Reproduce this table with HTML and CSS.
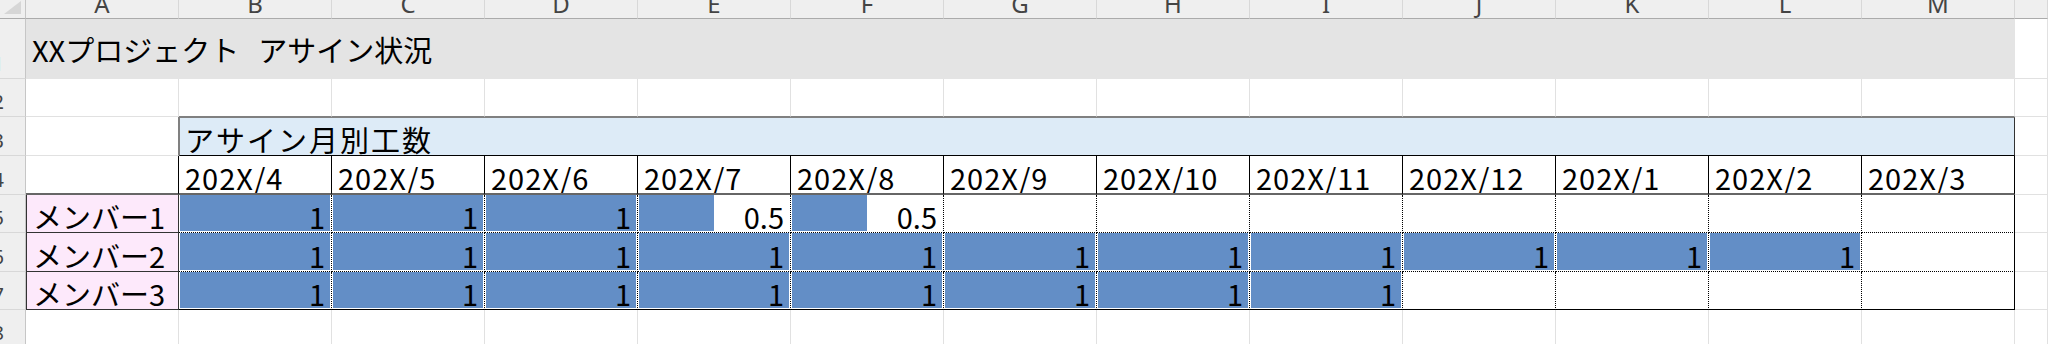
FILE: index.html
```html
<!DOCTYPE html>
<html lang="ja">
<head>
<meta charset="utf-8">
<title>XXプロジェクト アサイン状況</title>
<link rel="stylesheet" href="styles.css">
</head>
<body>
<div class="sheet">
  <!-- column headers -->
  <div class="corner"><svg class="tri" width="25" height="18" viewBox="0 0 25 18"><polygon points="21,1 21,14 4,14" fill="#d6d6d6"/></svg></div>
  <div class="ch">A</div><div class="ch">B</div><div class="ch">C</div><div class="ch">D</div><div class="ch">E</div><div class="ch">F</div><div class="ch">G</div><div class="ch">H</div><div class="ch">I</div><div class="ch">J</div><div class="ch">K</div><div class="ch">L</div><div class="ch">M</div><div class="ch"></div>

  <!-- row 1 -->
  <div class="rh">1</div>
  <div class="title txt">XXプロジェクト<span class="sp">　</span>アサイン状況</div>
  <div class="g"></div>

  <!-- row 2 -->
  <div class="rh">2</div>
  <div class="g"></div>
  <div class="g above"></div><div class="g above"></div><div class="g above"></div><div class="g above"></div><div class="g above"></div><div class="g above"></div><div class="g above"></div><div class="g above"></div><div class="g above"></div><div class="g above"></div><div class="g above"></div><div class="g above"></div>
  <div class="g"></div>

  <!-- row 3 -->
  <div class="rh">3</div>
  <div class="g beside"></div>
  <div class="banner txt">アサイン月別工数</div>
  <div class="g"></div>

  <!-- row 4 -->
  <div class="rh">4</div>
  <div class="g head-a"></div>
  <div class="date txt">202X/4</div><div class="date txt">202X/5</div><div class="date txt">202X/6</div><div class="date txt">202X/7</div><div class="date txt">202X/8</div><div class="date txt">202X/9</div><div class="date txt">202X/10</div><div class="date txt">202X/11</div><div class="date txt">202X/12</div><div class="date txt">202X/1</div><div class="date txt">202X/2</div><div class="date txt">202X/3</div>
  <div class="g"></div>

  <!-- row 5 -->
  <div class="rh">5</div>
  <div class="member txt">メンバー1</div>
  <div class="d txt bar" style="--v:1">1</div>
  <div class="d txt bar" style="--v:1">1</div>
  <div class="d txt bar" style="--v:1">1</div>
  <div class="d txt bar" style="--v:0.5">0.5</div>
  <div class="d txt bar" style="--v:0.5">0.5</div>
  <div class="d txt"></div><div class="d txt"></div><div class="d txt"></div><div class="d txt"></div><div class="d txt"></div><div class="d txt"></div>
  <div class="d txt last-col"></div>
  <div class="g"></div>

  <!-- row 6 -->
  <div class="rh">6</div>
  <div class="member txt">メンバー2</div>
  <div class="d txt bar" style="--v:1">1</div>
  <div class="d txt bar" style="--v:1">1</div>
  <div class="d txt bar" style="--v:1">1</div>
  <div class="d txt bar" style="--v:1">1</div>
  <div class="d txt bar" style="--v:1">1</div>
  <div class="d txt bar" style="--v:1">1</div>
  <div class="d txt bar" style="--v:1">1</div>
  <div class="d txt bar" style="--v:1">1</div>
  <div class="d txt bar" style="--v:1">1</div>
  <div class="d txt bar" style="--v:1">1</div>
  <div class="d txt bar" style="--v:1">1</div>
  <div class="d txt last-col"></div>
  <div class="g"></div>

  <!-- row 7 -->
  <div class="rh">7</div>
  <div class="member txt">メンバー3</div>
  <div class="d txt last-row bar" style="--v:1">1</div>
  <div class="d txt last-row bar" style="--v:1">1</div>
  <div class="d txt last-row bar" style="--v:1">1</div>
  <div class="d txt last-row bar" style="--v:1">1</div>
  <div class="d txt last-row bar" style="--v:1">1</div>
  <div class="d txt last-row bar" style="--v:1">1</div>
  <div class="d txt last-row bar" style="--v:1">1</div>
  <div class="d txt last-row bar" style="--v:1">1</div>
  <div class="d txt last-row"></div><div class="d txt last-row"></div><div class="d txt last-row"></div>
  <div class="d txt last-row last-col"></div>
  <div class="g"></div>

  <!-- row 8 -->
  <div class="rh">8</div>
  <div class="g"></div><div class="g"></div><div class="g"></div><div class="g"></div><div class="g"></div><div class="g"></div><div class="g"></div><div class="g"></div><div class="g"></div><div class="g"></div><div class="g"></div><div class="g"></div><div class="g"></div>
  <div class="g"></div>
</div>
</body>
</html>
```

FILE: styles.css
```css
* {
  box-sizing: border-box;
  margin: 0;
  padding: 0;
}

html,
body {
  width: 2048px;
  height: 344px;
  overflow: hidden;
  background: #ffffff;
}

body {
  font-family: "Noto Sans CJK JP", "Noto Sans", sans-serif;
  color: #000000;
}

.sheet {
  display: grid;
  grid-template-columns: 26px repeat(13, 153px) 1fr;
  grid-template-rows: 19px 60px 38px 39px 39px 38px 39px 38px 38px;
}

.sheet > div {
  overflow: hidden;
  display: flex;
  align-items: flex-end;
  white-space: nowrap;
}

/* headers */
.corner {
  background: #efefef;
  border-right: 1px solid #c6c6c6;
  border-bottom: 1px solid #ababab;
}

.tri {
  display: block;
}

.ch {
  background: #efefef;
  border-right: 1px solid #d8d8d8;
  border-bottom: 1px solid #ababab;
  justify-content: center;
  font-family: "Noto Sans", sans-serif;
  font-size: 24px;
  line-height: 1;
  color: #444444;
  padding-bottom: 2px;
}

.rh {
  background: #efefef;
  border-right: 1px solid #c6c6c6;
  border-bottom: 1px solid #d8d8d8;
  justify-content: flex-end;
  padding-right: 21px;
  padding-bottom: 4px;
  font-family: "Noto Sans", sans-serif;
  font-size: 20px;
  line-height: 1;
  color: #444444;
}

/* ordinary grid cells */
.g {
  border-right: 1px solid #e1e1e1;
  border-bottom: 1px solid #e1e1e1;
}

.g.above {
  border-bottom-color: #808080;
}

.g.beside {
  border-right-color: #808080;
}

.g.head-a {
  border-right-color: #000000;
  border-bottom: 2px solid #666666;
}

/* text cells */
.txt {
  font-size: 29px;
  line-height: 1;
  padding: 0 6px 1px;
}

.title {
  grid-column: span 13;
  background: #e4e4e4;
  align-items: center !important;
  padding-top: 2px;
}

.sp {
  letter-spacing: -10px;
}

.banner {
  grid-column: span 12;
  background: #ddebf7;
  border-top: 1px solid #808080;
  border-left: 1px solid #808080;
  border-right: 1px solid #333333;
  border-bottom: 1px solid #000000;
  padding-left: 5px;
  letter-spacing: 2px;
}

.date {
  border-right: 1px solid #000000;
  border-bottom: 2px solid #666666;
  letter-spacing: 1px;
}

.member {
  background: #fde9fb;
  border-left: 1px solid #333333;
  border-right: 1px solid #333333;
  border-bottom: 1px solid #333333;
}

.d {
  justify-content: flex-end;
  border-right: 1px dotted #000000;
  border-bottom: 1px dotted #000000;
}

.d.last-col {
  border-right: 1px solid #000000;
}

.d.last-row {
  border-bottom: 1px solid #000000;
}

.bar {
  background-image: linear-gradient(#638ec6, #638ec6);
  background-repeat: no-repeat;
  background-position: 1px 0;
  background-size: calc((100% - 2px) * var(--v)) calc(100% - 1px);
}
```
